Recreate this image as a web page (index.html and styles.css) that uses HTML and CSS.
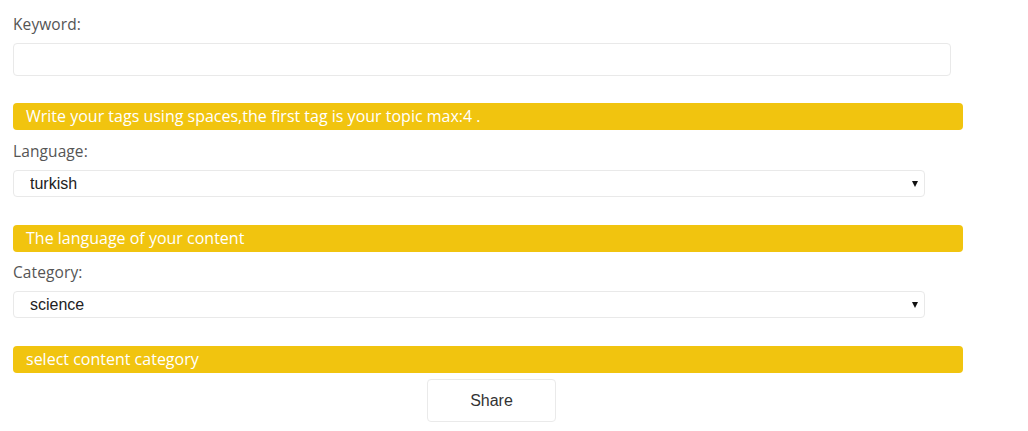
FILE: index.html
```html
<!DOCTYPE html>
<html>
    <head>
        <meta charset="UTF-8">
        <meta name="viewport" content="width=device-width, initial-scale=1">
        <link rel="stylesheet" href="styles.css">
    </head>
    <body>
        <form class="share-form">
            <div class="field">
                <label class="field-label" for="keyword">Keyword:</label>
                <input type="text" id="keyword" class="text-input">
                <div class="hint">Write your tags using spaces,the first tag is your topic max:4 .</div>
            </div>

            <div class="field">
                <label class="field-label" for="language">Language:</label>
                <div class="select-wrap">
                    <select id="language" class="select-input">
                        <option>turkish</option>
                        <option>english</option>
                    </select>
                </div>
                <div class="hint">The language of your content</div>
            </div>

            <div class="field field-last">
                <label class="field-label" for="category">Category:</label>
                <div class="select-wrap">
                    <select id="category" class="select-input">
                        <option>science</option>
                        <option>art</option>
                    </select>
                </div>
                <div class="hint">select content category</div>
            </div>

            <div class="actions">
                <button type="button" class="share-btn">Share</button>
            </div>
        </form>
    </body>
</html>
```

FILE: styles.css
```css
* {
    box-sizing: border-box;
}

body {
    margin: 0;
    background: #fff;
    font-family: "Open Sans", "Lato", sans-serif;
    color: #555;
}

.share-form {
    padding: 14px 13px 0 13px;
}

.field {
    display: flex;
    flex-direction: column;
    align-items: flex-start;
}

.field + .field .field-label {
    margin-top: 11px;
}

.field-last .field-label {
    margin-top: 10px !important;
}

.field-label {
    display: block;
    font-size: 15.5px;
    letter-spacing: 0.1px;
    line-height: 21px;
    margin-bottom: 8px;
    color: #555;
}

/* Keyword text box */
.text-input {
    width: 938px;
    height: 33px;
    border: 1px solid #e9e9e9;
    border-radius: 4px;
    padding: 6px 12px;
    font-size: 15px;
    outline: none;
}

/* Dropdowns */
.select-wrap {
    position: relative;
    width: 912px;
}

/* small black triangle like the old native arrow */
.select-wrap::after {
    content: "";
    position: absolute;
    right: 7px;
    top: 11px;
    border-left: 3px solid transparent;
    border-right: 3px solid transparent;
    border-top: 6px solid #111;
    pointer-events: none;
}

.select-input {
    -webkit-appearance: none;
    appearance: none;
    display: block;
    width: 100%;
    height: 27px;
    border: 1px solid #e9e9e9;
    border-radius: 4px;
    background: #fff;
    padding: 0 16px;
    font-family: "Liberation Sans", Arial, sans-serif;
    font-size: 16px;
    color: #222;
    outline: none;
}

/* Yellow help bars */
.hint {
    width: 950px;
    height: 27px;
    margin-top: 27px;
    padding: 0 13px;
    background: #f1c40f;
    border-radius: 4px;
    color: #fff;
    font-size: 16px;
    line-height: 27px;
    white-space: nowrap;
}

.select-wrap + .hint {
    margin-top: 28px;
}

.actions {
    padding: 6px 0 0 414px;
}

.share-btn {
    width: 129px;
    height: 43px;
    background: #fff;
    border: 1px solid #eaeaea;
    border-radius: 4px;
    font-family: "Liberation Sans", Arial, sans-serif;
    font-size: 16px;
    color: #333;
    cursor: pointer;
}
```
